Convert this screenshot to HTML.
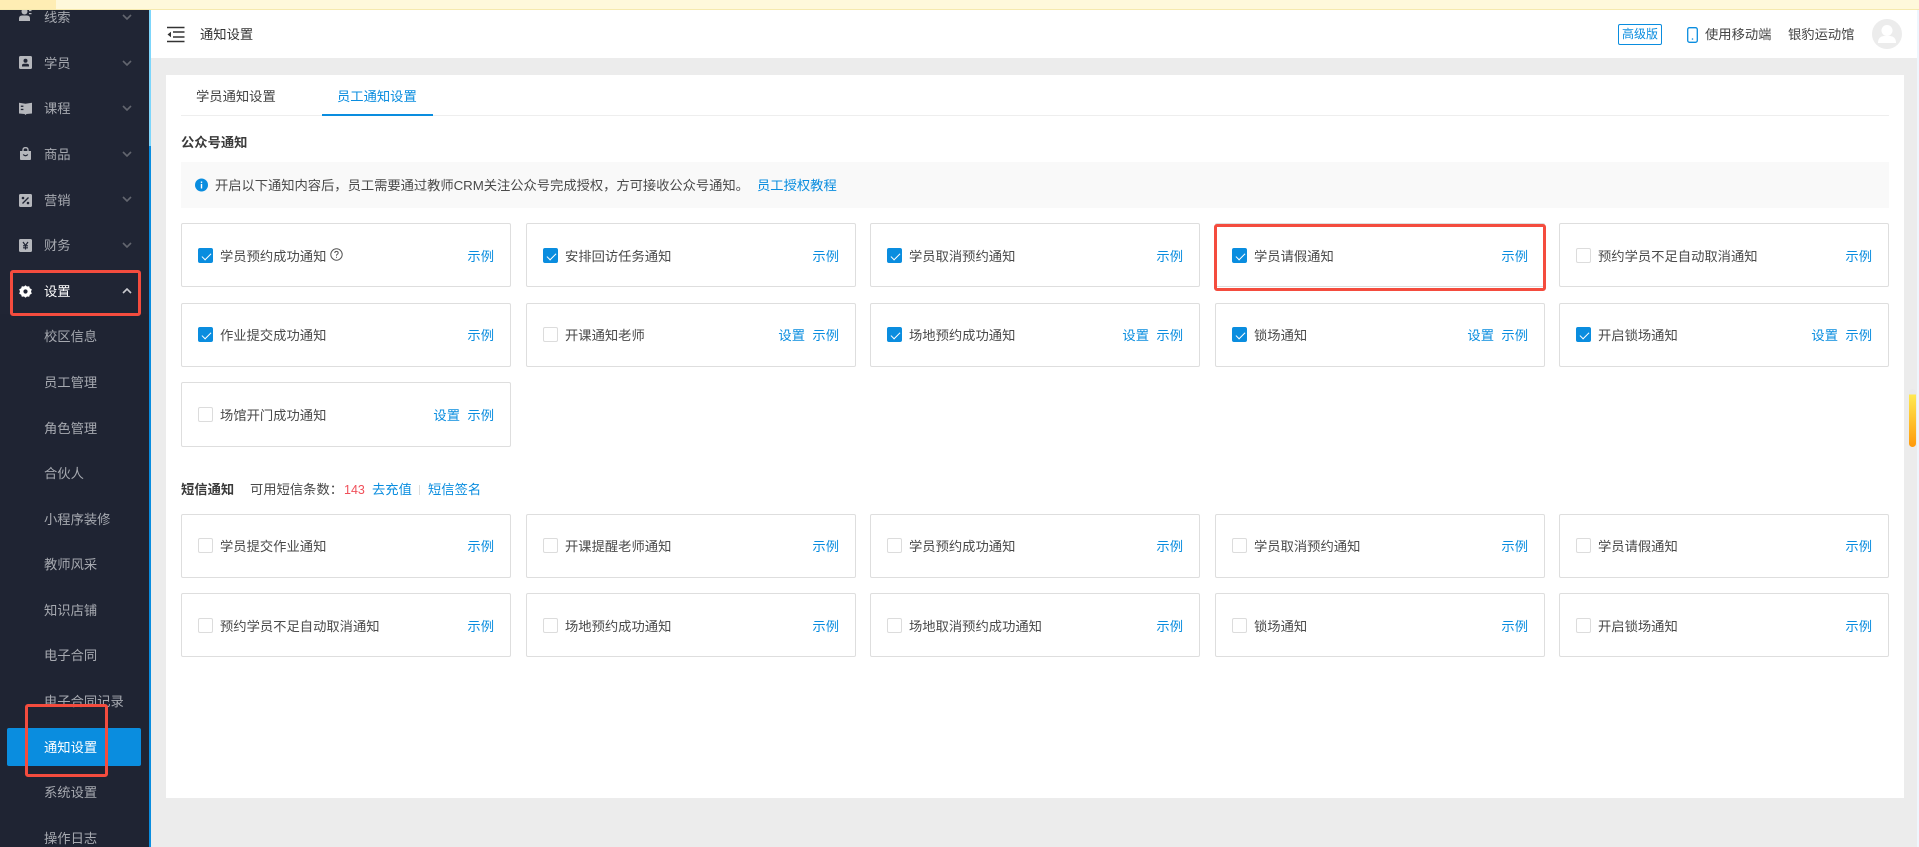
<!DOCTYPE html>
<html lang="zh-CN">
<head>
<meta charset="utf-8">
<title>通知设置</title>
<style>
*{box-sizing:border-box;margin:0;padding:0}
html,body{width:1919px;height:847px;overflow:hidden;background:#ececec}
body{position:relative;font-family:"Liberation Sans","Noto Sans CJK SC",sans-serif;font-size:13.3px;color:#4a4a4a}
a{color:#0a8ddf;text-decoration:none}
.abs,.top,.side,.hd,.main,.red{position:absolute}
.top{left:0;top:0;width:1919px;height:10px;background:#fef8db;border-bottom:1px solid #f5e9ae}
.top i{position:absolute;left:0;top:0;width:56px;height:9px;background:#feedb4}
.side{left:0;top:10px;width:149px;height:837px;background:#202534;overflow:hidden}
.sub{position:absolute;left:0;top:304px;width:149px;height:533px;background:#1f2433}
.strip{position:absolute;left:149px;top:10px;width:2px;height:837px;background:#0a8ddf}
.strip i{position:absolute;left:0;top:0;width:2px;height:136px;background:#7dd6fb}
.mi{position:absolute;left:44px;line-height:20px;height:20px;color:#a6a9b0;white-space:nowrap}
.ic{position:absolute;left:19px;width:13px;height:13px}
.chev{position:absolute;left:122px;width:10px;height:6px}
.act{position:absolute;left:7px;top:718px;width:134px;height:38px;background:#0a8ddf;border-radius:2px}
.hd{left:151px;top:10px;width:1766px;height:48px;background:#fff}
.rs{position:absolute;left:1917px;top:10px;width:2px;height:837px;background:#eef6fd}
.main{left:166px;top:75px;width:1738px;height:723px;background:#fff}
.t{position:absolute;line-height:20px;height:20px;white-space:nowrap}
.card{position:absolute;width:330px;height:64px;border:1px solid #dedede;border-radius:2px;background:#fff}
.cb{position:absolute;left:16px;top:24px;width:15px;height:15px;border:1px solid #dcdcdc;border-radius:2px;background:#fff}
.cb.on{background:#0a8ddf;border-color:#0a8ddf}
.cb.on:after{content:"";position:absolute;left:4.5px;top:1.5px;width:4px;height:8px;border:solid #fff;border-width:0 1.2px 1.2px 0;transform:rotate(45deg)}
.lb{position:absolute;left:38px;top:23px;line-height:20px;color:#4a4a4a;white-space:nowrap}
.ex{position:absolute;right:16px;top:23px;line-height:20px;color:#0a8ddf}
.st{position:absolute;right:50px;top:23px;line-height:20px;color:#0a8ddf}
.u .cb{top:23px}
.u .lb,.u .ex,.u .st{top:22px}
.red{border:3px solid #f44c3e;border-radius:3px}
.bar{position:absolute;left:1909px;top:389px;width:7px;height:58px;border-radius:3.5px;background:linear-gradient(#e9e9e9 0,#e9e9e9 5px,#ffe850 6px,#ff9a0c 100%)}
</style>
</head>
<body>
<div class="side">
  <div class="sub"></div>
  <div class="act"></div>

  <svg class="ic" style="top:0" viewBox="0 0 13 13"><circle cx="5.5" cy="1.5" r="3" fill="#b5b7bc"/><path d="M0 11V8.5Q0 5.5 3 5.5H8Q11 5.5 11 8.5V11Z" fill="#b5b7bc"/><rect x="10" y="0" width="2.5" height="1.2" fill="#b5b7bc"/><rect x="10" y="3" width="2.5" height="1.2" fill="#b5b7bc"/></svg>
  <div class="mi" style="top:-2px">线索</div>
  <svg class="chev" style="top:4px" viewBox="0 0 10 6"><path d="M1 1L5 5L9 1" fill="none" stroke="#63666f" stroke-width="1.6"/></svg>

  <svg class="ic" style="top:46px" viewBox="0 0 13 13"><rect width="13" height="13" rx="1.5" fill="#b5b7bc"/><circle cx="6.5" cy="4.8" r="2" fill="#202534"/><path d="M3 10.5V9.5Q3 7.8 5 7.8H8Q10 7.8 10 9.5V10.5Z" fill="#202534"/></svg>
  <div class="mi" style="top:44px">学员</div>
  <svg class="chev" style="top:50px" viewBox="0 0 10 6"><path d="M1 1L5 5L9 1" fill="none" stroke="#63666f" stroke-width="1.6"/></svg>

  <svg class="ic" style="top:92px" viewBox="0 0 13 13"><path d="M0 .8L6.5 1.8L13 .8V11.5L7.5 12L6.5 13L5.5 12L0 11.5Z" fill="#b5b7bc"/><rect x="1.8" y="3.6" width="2.6" height="1.3" fill="#202534"/><rect x="1.8" y="6.8" width="2.6" height="1.3" fill="#202534"/></svg>
  <div class="mi" style="top:89px">课程</div>
  <svg class="chev" style="top:95px" viewBox="0 0 10 6"><path d="M1 1L5 5L9 1" fill="none" stroke="#63666f" stroke-width="1.6"/></svg>

  <svg class="ic" style="top:137px" viewBox="0 0 13 13"><path d="M1 4H12V12Q12 13 11 13H2Q1 13 1 12Z" fill="#b5b7bc"/><path d="M4 4V3Q4 .7 6.5 .7T9 3V4" fill="none" stroke="#b5b7bc" stroke-width="1.3"/><path d="M4.2 7.5Q6.5 10 8.8 7.5" fill="none" stroke="#202534" stroke-width="1.2"/></svg>
  <div class="mi" style="top:135px">商品</div>
  <svg class="chev" style="top:141px" viewBox="0 0 10 6"><path d="M1 1L5 5L9 1" fill="none" stroke="#63666f" stroke-width="1.6"/></svg>

  <svg class="ic" style="top:184px" viewBox="0 0 13 13"><rect width="13" height="13" rx="1.5" fill="#b5b7bc"/><path d="M3.5 9.5L9.5 3.5" stroke="#202534" stroke-width="1.3"/><circle cx="4" cy="4" r="1.3" fill="#202534"/><circle cx="9" cy="9" r="1.3" fill="#202534"/></svg>
  <div class="mi" style="top:181px">营销</div>
  <svg class="chev" style="top:186px" viewBox="0 0 10 6"><path d="M1 1L5 5L9 1" fill="none" stroke="#63666f" stroke-width="1.6"/></svg>

  <svg class="ic" style="top:229px" viewBox="0 0 13 13"><rect width="13" height="13" rx="1.5" fill="#b5b7bc"/><path d="M4 3L6.5 6.5L9 3M6.5 6.5V10.5M4 6.8H9M4 8.8H9" fill="none" stroke="#202534" stroke-width="1.2"/></svg>
  <div class="mi" style="top:226px">财务</div>
  <svg class="chev" style="top:232px" viewBox="0 0 10 6"><path d="M1 1L5 5L9 1" fill="none" stroke="#63666f" stroke-width="1.6"/></svg>

  <svg class="ic" style="top:275px" viewBox="0 0 13 13"><path d="M6.5 .2L8 1.5L10.2 1.2L10.8 3.2L12.8 4.4L12 6.5L12.8 8.6L10.8 9.8L10.2 11.8L8 11.5L6.5 12.8L5 11.5L2.8 11.8L2.2 9.8L.2 8.6L1 6.5L.2 4.4L2.2 3.2L2.8 1.2L5 1.5Z" fill="#fff"/><circle cx="6.5" cy="6.5" r="2.1" fill="#202534"/></svg>
  <div class="mi" style="top:272px;color:#fff">设置</div>
  <svg class="chev" style="top:278px" viewBox="0 0 10 6"><path d="M1 5L5 1L9 5" fill="none" stroke="#c9cacf" stroke-width="1.6"/></svg>

  <div class="mi" style="top:317px">校区信息</div>
  <div class="mi" style="top:363px">员工管理</div>
  <div class="mi" style="top:409px">角色管理</div>
  <div class="mi" style="top:454px">合伙人</div>
  <div class="mi" style="top:500px">小程序装修</div>
  <div class="mi" style="top:545px">教师风采</div>
  <div class="mi" style="top:591px">知识店铺</div>
  <div class="mi" style="top:636px">电子合同</div>
  <div class="mi" style="top:682px">电子合同记录</div>
  <div class="mi" style="top:728px;color:#fff">通知设置</div>
  <div class="mi" style="top:773px">系统设置</div>
  <div class="mi" style="top:819px">操作日志</div>
</div>
<div class="strip"><i></i></div>

<div class="hd">
  <svg class="abs" style="left:16px;top:16px" width="18" height="17" viewBox="0 0 18 17"><path d="M0 1.5H17.5M0 15.5H17.5M6 6H17.5M6 11H17.5" stroke="#333" stroke-width="1.4" fill="none"/><path d="M0.5 8.5L4 5.8V11.2Z" fill="#333"/></svg>
  <div class="t" style="left:49px;top:15px;color:#333">通知设置</div>
  <div class="abs" style="left:1467px;top:14px;width:44px;height:21px;border:1px solid #0a8ddf;border-radius:2px;color:#0a8ddf;font-size:12px;line-height:19px;text-align:center">高级版</div>
  <svg class="abs" style="left:1536px;top:17px" width="11" height="16" viewBox="0 0 11 16"><rect x=".7" y=".7" width="9.6" height="14.6" rx="1.8" fill="none" stroke="#0a8ddf" stroke-width="1.3"/><circle cx="5.5" cy="12" r=".8" fill="#0a8ddf"/></svg>
  <div class="t" style="left:1554px;top:15px;color:#444">使用移动端</div>
  <div class="t" style="left:1637px;top:15px;color:#444">银豹运动馆</div>
  <svg class="abs" style="left:1721px;top:9px" width="30" height="30" viewBox="0 0 30 30"><circle cx="15" cy="15" r="15" fill="#ececec"/><circle cx="15" cy="11.5" r="5.5" fill="#fff"/><path d="M6 24Q6 17.5 12 17H18Q24 17.5 24 24Z" fill="#fff"/></svg>
</div>
<div class="rs"></div>

<div class="top"><i></i></div>

<div class="main">
  <div class="t" style="left:30px;top:12px;color:#444">学员通知设置</div>
  <div class="t" style="left:171px;top:12px;color:#0a8ddf">员工通知设置</div>
  <div class="abs" style="left:15px;top:40px;width:1708px;height:1px;background:#eee"></div>
  <div class="abs" style="left:156px;top:39px;width:111px;height:2px;background:#0a8ddf"></div>
  <div class="t" style="left:15px;top:58px;font-weight:700;color:#3a3a3a">公众号通知</div>

  <div class="abs" style="left:15px;top:87px;width:1708px;height:46px;background:#f9f9f9"></div>
  <svg class="abs" style="left:29px;top:103px" width="13" height="14" viewBox="0 0 13 13"><circle cx="6.5" cy="6.5" r="6.5" fill="#0a8ddf"/><rect x="5.8" y="5.4" width="1.4" height="4.6" fill="#fff"/><rect x="5.8" y="3" width="1.4" height="1.4" fill="#fff"/></svg>
  <div class="t" style="left:49px;top:101px;color:#4a4a4a;letter-spacing:-.04px">开启以下通知内容后，员工需要通过教师CRM关注公众号完成授权，方可接收公众号通知。</div>
  <div class="t" style="left:591px;top:101px"><a>员工授权教程</a></div>

  <div class="card" style="left:15px;top:148px"><i class="cb on"></i><span class="lb">学员预约成功通知</span><svg class="abs" style="left:148px;top:24px" width="13" height="13" viewBox="0 0 13 13"><circle cx="6.5" cy="6.5" r="5.7" fill="none" stroke="#555" stroke-width="1"/><path d="M4.8 5Q4.8 3.4 6.5 3.4T8.2 5Q8.2 6 7 6.5Q6.5 6.8 6.5 7.8" fill="none" stroke="#555" stroke-width="1"/><rect x="6" y="8.8" width="1" height="1" fill="#555"/></svg><a class="ex">示例</a></div>
  <div class="card" style="left:360px;top:148px"><i class="cb on"></i><span class="lb">安排回访任务通知</span><a class="ex">示例</a></div>
  <div class="card" style="left:704px;top:148px"><i class="cb on"></i><span class="lb">学员取消预约通知</span><a class="ex">示例</a></div>
  <div class="card" style="left:1049px;top:148px"><i class="cb on"></i><span class="lb">学员请假通知</span><a class="ex">示例</a></div>
  <div class="card" style="left:1393px;top:148px"><i class="cb"></i><span class="lb">预约学员不足自动取消通知</span><a class="ex">示例</a></div>

  <div class="card u" style="left:15px;top:228px"><i class="cb on"></i><span class="lb">作业提交成功通知</span><a class="ex">示例</a></div>
  <div class="card u" style="left:360px;top:228px"><i class="cb"></i><span class="lb">开课通知老师</span><a class="st">设置</a><a class="ex">示例</a></div>
  <div class="card u" style="left:704px;top:228px"><i class="cb on"></i><span class="lb">场地预约成功通知</span><a class="st">设置</a><a class="ex">示例</a></div>
  <div class="card u" style="left:1049px;top:228px"><i class="cb on"></i><span class="lb">锁场通知</span><a class="st">设置</a><a class="ex">示例</a></div>
  <div class="card u" style="left:1393px;top:228px"><i class="cb on"></i><span class="lb">开启锁场通知</span><a class="st">设置</a><a class="ex">示例</a></div>

  <div class="card" style="left:15px;top:307px;height:65px"><i class="cb"></i><span class="lb">场馆开门成功通知</span><a class="st">设置</a><a class="ex">示例</a></div>

  <div class="t" style="left:15px;top:405px;font-weight:700;color:#3a3a3a">短信通知</div>
  <div class="t" style="left:84px;top:405px;color:#4a4a4a">可用短信条数：</div>
  <div class="t" style="left:178px;top:405px;color:#f0505a;font-size:12.5px">143</div>
  <div class="t" style="left:206px;top:405px"><a>去充值</a></div>
  <div class="abs" style="left:253px;top:410px;width:1px;height:10px;background:#ddd"></div>
  <div class="t" style="left:262px;top:405px"><a>短信签名</a></div>

  <div class="card u" style="left:15px;top:439px"><i class="cb"></i><span class="lb">学员提交作业通知</span><a class="ex">示例</a></div>
  <div class="card u" style="left:360px;top:439px"><i class="cb"></i><span class="lb">开课提醒老师通知</span><a class="ex">示例</a></div>
  <div class="card u" style="left:704px;top:439px"><i class="cb"></i><span class="lb">学员预约成功通知</span><a class="ex">示例</a></div>
  <div class="card u" style="left:1049px;top:439px"><i class="cb"></i><span class="lb">学员取消预约通知</span><a class="ex">示例</a></div>
  <div class="card u" style="left:1393px;top:439px"><i class="cb"></i><span class="lb">学员请假通知</span><a class="ex">示例</a></div>

  <div class="card" style="left:15px;top:518px"><i class="cb"></i><span class="lb">预约学员不足自动取消通知</span><a class="ex">示例</a></div>
  <div class="card" style="left:360px;top:518px"><i class="cb"></i><span class="lb">场地预约成功通知</span><a class="ex">示例</a></div>
  <div class="card" style="left:704px;top:518px"><i class="cb"></i><span class="lb">场地取消预约成功通知</span><a class="ex">示例</a></div>
  <div class="card" style="left:1049px;top:518px"><i class="cb"></i><span class="lb">锁场通知</span><a class="ex">示例</a></div>
  <div class="card" style="left:1393px;top:518px"><i class="cb"></i><span class="lb">开启锁场通知</span><a class="ex">示例</a></div>
</div>

<div class="bar"></div>

<div class="red" style="left:10px;top:270px;width:131px;height:46px"></div>
<div class="red" style="left:25px;top:704px;width:83px;height:73px"></div>
<div class="red" style="left:1214px;top:224px;width:332px;height:67px"></div>
</body>
</html>
